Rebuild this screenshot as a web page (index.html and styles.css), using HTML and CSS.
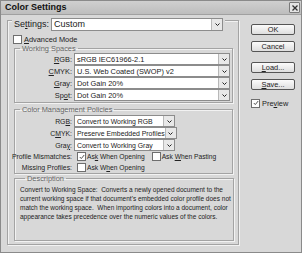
FILE: index.html
```html
<!DOCTYPE html>
<html lang="en">
<head>
    <meta charset="UTF-8">
    <title>Color Settings</title>
    <link rel="stylesheet" href="styles.css">
</head>
<body>
<div class="dialog">
    <div class="titlebar">
        <span class="title">Color Settings</span>
        <span class="close">
            <svg width="6" height="6" viewBox="0 0 6 6"><path d="M0.5 0.5L5.5 5.5M5.5 0.5L0.5 5.5" stroke="#333" stroke-width="1.3"/></svg>
        </span>
    </div>

    <div class="content">
        <div class="main">
            <div class="settings-row">
                <span class="label">Se<u>t</u>tings:</span>
                <div class="select wide">
                    <span class="value">Custom</span>
                    <span class="arrow"><svg width="5" height="3" viewBox="0 0 5 3"><path d="M0.5 0.5L2.5 2.5L4.5 0.5" stroke="#222" fill="none"/></svg></span>
                </div>
            </div>

            <label class="check-row advanced">
                <span class="box"></span><span><u>A</u>dvanced Mode</span>
            </label>

            <fieldset class="group spaces">
                <legend>Working Spaces</legend>
                <div class="row">
                    <span class="label"><span><u>R</u>GB:</span></span>
                    <div class="select"><span class="value">sRGB IEC61966-2.1</span><span class="arrow"><svg width="5" height="3" viewBox="0 0 5 3"><path d="M0.5 0.5L2.5 2.5L4.5 0.5" stroke="#222" fill="none"/></svg></span></div>
                </div>
                <div class="row">
                    <span class="label"><span><u>C</u>MYK:</span></span>
                    <div class="select"><span class="value">U.S. Web Coated (SWOP) v2</span><span class="arrow"><svg width="5" height="3" viewBox="0 0 5 3"><path d="M0.5 0.5L2.5 2.5L4.5 0.5" stroke="#222" fill="none"/></svg></span></div>
                </div>
                <div class="row">
                    <span class="label"><span><u>G</u>ray:</span></span>
                    <div class="select"><span class="value">Dot Gain 20%</span><span class="arrow"><svg width="5" height="3" viewBox="0 0 5 3"><path d="M0.5 0.5L2.5 2.5L4.5 0.5" stroke="#222" fill="none"/></svg></span></div>
                </div>
                <div class="row">
                    <span class="label"><span>Sp<u>o</u>t:</span></span>
                    <div class="select"><span class="value">Dot Gain 20%</span><span class="arrow"><svg width="5" height="3" viewBox="0 0 5 3"><path d="M0.5 0.5L2.5 2.5L4.5 0.5" stroke="#222" fill="none"/></svg></span></div>
                </div>
            </fieldset>

            <fieldset class="group policies">
                <legend>Color Management Policies</legend>
                <div class="row">
                    <span class="label"><span>RG<u>B</u>:</span></span>
                    <div class="select short"><span class="value">Convert to Working RGB</span><span class="arrow"><svg width="5" height="3" viewBox="0 0 5 3"><path d="M0.5 0.5L2.5 2.5L4.5 0.5" stroke="#222" fill="none"/></svg></span></div>
                </div>
                <div class="row">
                    <span class="label"><span>C<u>M</u>YK:</span></span>
                    <div class="select short"><span class="value">Preserve Embedded Profiles</span><span class="arrow"><svg width="5" height="3" viewBox="0 0 5 3"><path d="M0.5 0.5L2.5 2.5L4.5 0.5" stroke="#222" fill="none"/></svg></span></div>
                </div>
                <div class="row">
                    <span class="label"><span>Gra<u>y</u>:</span></span>
                    <div class="select short"><span class="value">Convert to Working Gray</span><span class="arrow"><svg width="5" height="3" viewBox="0 0 5 3"><path d="M0.5 0.5L2.5 2.5L4.5 0.5" stroke="#222" fill="none"/></svg></span></div>
                </div>
                <div class="row small">
                    <span class="label"><span>Profile Mismatches:</span></span>
                    <label class="check-row inline"><span class="box"><svg width="6" height="6" viewBox="0 0 6 6"><path d="M0.8 3L2.3 4.6L5.2 1" stroke="#555" fill="none" stroke-width="1"/></svg></span><span>As<u>k</u> When Opening</span></label>
                    <label class="check-row inline"><span class="box"></span><span>Ask <u>W</u>hen Pasting</span></label>
                </div>
                <div class="row small">
                    <span class="label"><span>Missing Profiles:</span></span>
                    <label class="check-row inline"><span class="box"></span><span>Ask W<u>h</u>en Opening</span></label>
                </div>
            </fieldset>

            <fieldset class="group desc">
                <legend>Description</legend>
                <p>Convert to Working Space:&nbsp; Converts a newly opened document to the<br>current working space if that document's embedded color profile does not<br>match the working space.&nbsp; When importing colors into a document, color<br>appearance takes precedence over the numeric values of the colors.</p>
            </fieldset>
        </div>

        <div class="side">
            <div class="btn">OK</div>
            <div class="btn">Cancel</div>
            <div class="btn gap"><span><u>L</u>oad...</span></div>
            <div class="btn"><span><u>S</u>ave...</span></div>
            <label class="check-row preview"><span class="box"><svg width="6" height="6" viewBox="0 0 6 6"><path d="M0.8 3L2.3 4.6L5.2 1" stroke="#555" fill="none" stroke-width="1"/></svg></span><span>Pre<u>v</u>iew</span></label>
        </div>
    </div>
</div>
</body>
</html>
```

FILE: styles.css
```css
body {
    margin: 0;
    background: #fff;
    font-family: "Liberation Sans", Arial, sans-serif;
    font-size: 7.4px;
    line-height: 9px;
    color: #222;
}
u {
    text-decoration-thickness: 0.5px;
    text-underline-offset: 1px;
}
.dialog {
    width: 302px;
    height: 253px;
    box-sizing: border-box;
    background: #d8d8d8;
    border: 1px solid #8a8a8a;
    display: flex;
    flex-direction: column;
}
.titlebar {
    height: 13px;
    flex: none;
    display: flex;
    align-items: center;
    justify-content: space-between;
    padding: 0 1px 0 4px;
    background: linear-gradient(#d0d0d0, #bdbdbd);
    border-bottom: 1px solid #a0a0a0;
}
.title {
    font-weight: bold;
    font-size: 9px;
    color: #111;
}
.close {
    width: 9px;
    height: 9px;
    border: 1px solid #7a7a7a;
    border-radius: 1px;
    background: #e4e4e4;
    display: flex;
    align-items: center;
    justify-content: center;
}
.content {
    flex: 1;
    display: flex;
    padding: 5px 6px 7px 6px;
    gap: 12px;
}
.main, .group {
    margin: 0;
    border: 1px solid #a3a3a3;
    box-shadow: inset 1px 1px 0 #f2f2f2, 1px 1px 0 #f2f2f2;
}
.main {
    width: 232px;
    box-sizing: border-box;
    padding: 0 5px 3px 6px;
    display: flex;
    flex-direction: column;
}
.settings-row {
    display: flex;
    align-items: center;
    gap: 2px;
    align-self: flex-start;
    margin: -3px 0 0 -2px;
    padding: 0 2px;
    background: #d8d8d8;
    font-size: 9px;
}
.select {
    display: flex;
    align-items: stretch;
    height: 10px;
    background: #fff;
    border: 1px solid #8c8c8c;
    flex: 1;
}
.select.wide {
    flex: none;
    width: 170px;
    height: 11px;
}
.select.short {
    flex: 0 0 99px;
}
.select .value {
    flex: 1;
    padding-left: 2px;
    display: flex;
    align-items: center;
    white-space: nowrap;
    overflow: hidden;
}
.select .arrow {
    width: 10px;
    background: #e8e8e8;
    border-left: 1px solid #b8b8b8;
    display: flex;
    align-items: center;
    justify-content: center;
}
.check-row {
    display: flex;
    align-items: center;
    gap: 2px;
    height: 10px;
    white-space: nowrap;
    flex: none;
}
.advanced {
    margin: 3px 0 0 -1px;
    align-self: flex-start;
}
.box {
    width: 7px;
    height: 7px;
    background: #fff;
    border: 1px solid #6e6e6e;
    display: flex;
    align-items: center;
    justify-content: center;
}
.check-row.inline {
    margin: 0 2px 0 3px;
    font-size: 6.7px;
    gap: 1px;
}
.group {
    padding: 0 2px 1px 0;
}
.group legend {
    color: #666;
    padding: 0 2px;
    margin-left: 5px;
}
.policies {
    margin-top: 2px;
    padding-top: 1px;
    padding-bottom: 0;
}
.policies .row {
    font-size: 6.9px;
}
.row {
    display: flex;
    align-items: center;
    height: 12px;
    gap: 2px;
    white-space: nowrap;
}
.row.small {
    height: 11px;
}
.row .label {
    width: 57px;
    flex: none;
    display: flex;
    justify-content: flex-end;
}
.desc {
    flex: 1;
    padding-left: 5px;
}
.desc p {
    margin: 2px 0 0 0;
    font-size: 6.5px;
    white-space: nowrap;
}
.side {
    width: 45px;
    display: flex;
    flex-direction: column;
    gap: 6px;
    padding-top: 4px;
}
.btn {
    height: 9px;
    border: 1px solid #555;
    border-radius: 2px;
    background: linear-gradient(#fbfbfb, #dedede);
    display: flex;
    align-items: center;
    justify-content: center;
}
.btn.gap {
    margin-top: 4px;
}
.preview {
    margin-top: 2px;
    align-self: flex-start;
}
```
